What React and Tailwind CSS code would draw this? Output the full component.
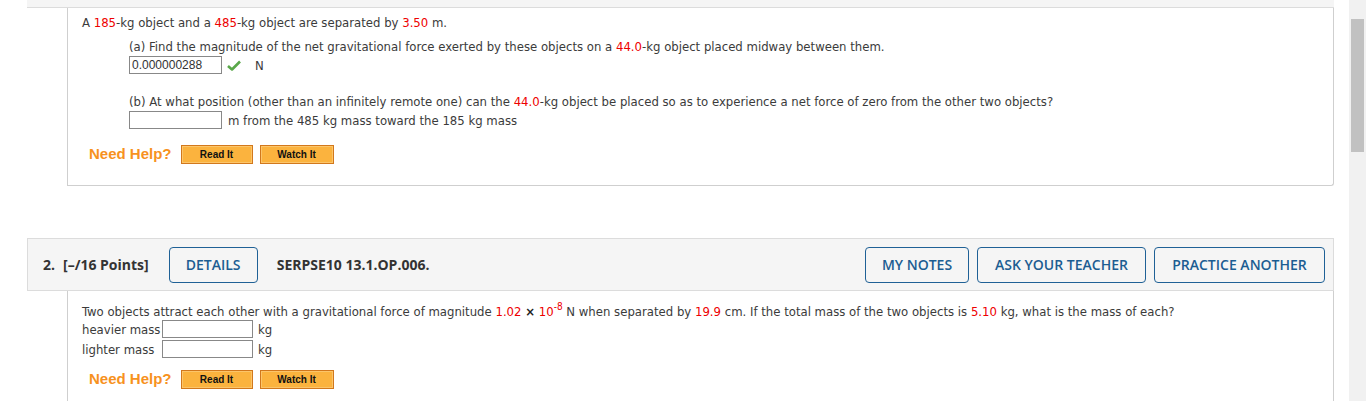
import React from "react";

const body = { fontFamily: '"DejaVu Sans Condensed", "Liberation Sans", sans-serif' };
const head = { fontFamily: '"Open Sans", "Liberation Sans", sans-serif' };

const Red = ({ children }) => <span className="text-[#ee0000]">{children}</span>;

const Check = () => (
  <svg width="14" height="11" viewBox="0 0 14 11" className="mx-[5px]">
    <path d="M1 6 L5 9.5 L13 1.5" fill="none" stroke="#5aa84a" strokeWidth="2.6" strokeLinejoin="round" />
  </svg>
);

const Box = ({ value = "", w = "w-[93px]" }) => (
  <div className={`${w} h-[18px] border border-[#888] bg-white px-[2px] text-[12px] leading-[16px] text-[#333]`} style={{ fontFamily: '"Liberation Sans", sans-serif' }}>
    {value}
  </div>
);

const OrangeBtn = ({ label, w }) => (
  <div className={`${w} h-[19px] border border-[#d2781c] bg-[#fbb33e] flex items-center justify-center shadow-[inset_0_0_0_1px_#fcc56a]`}>
    <span className="text-[10px] font-bold text-[#111]" style={{ fontFamily: '"Liberation Sans", sans-serif' }}>{label}</span>
  </div>
);

const NeedHelp = () => (
  <div className="flex items-center gap-[7px] ml-[7px]">
    <span className="text-[15px] font-bold text-[#f7921e] mr-[2px]" style={{ fontFamily: '"Liberation Sans", sans-serif' }}>Need Help?</span>
    <OrangeBtn label="Read It" w="w-[72px]" />
    <OrangeBtn label="Watch It" w="w-[74px]" />
  </div>
);

const BlueBtn = ({ children, w }) => (
  <div className={`${w} h-[36px] border border-[#1f6196] rounded-[4px] flex items-center justify-center text-[14px] font-semibold text-[#1c5d92]`}>
    {children}
  </div>
);

export default function App() {
  return (
    <div className="flex w-[1366px] h-[401px] overflow-hidden bg-white text-[13px] text-[#3b3b3b]" style={body}>
      <div className="flex-1 pl-[27px]">
        <div className="w-[1307px]">
          {/* question 1 tail */}
          <div className="h-[8px] bg-[#f5f5f5] border-b border-[#dcdcdc]" />
          <div className="ml-[40px] h-[178px] border-l border-r border-b border-[#cfcfcf] rounded-br-[3px] pl-[14px] pt-[6px]">
            <div className="leading-[17px]">
              A <Red>185</Red>-kg object and a <Red>485</Red>-kg object are separated by <Red>3.50</Red> m.
            </div>
            <div className="ml-[47px] mt-[7px] leading-[17px]">
              <div>(a) Find the magnitude of the net gravitational force exerted by these objects on a <Red>44.0</Red>-kg object placed midway between them.</div>
              <div className="flex items-center mt-[1px]">
                <Box value="0.000000288" />
                <Check />
                <span className="ml-[9px]">N</span>
              </div>
              <div className="mt-[19px]">(b) At what position (other than an infinitely remote one) can the <Red>44.0</Red>-kg object be placed so as to experience a net force of zero from the other two objects?</div>
              <div className="flex items-center mt-[1px]">
                <Box />
                <span className="ml-[6px]">m from the 485 kg mass toward the 185 kg mass</span>
              </div>
            </div>
            <div className="mt-[14px]">
              <NeedHelp />
            </div>
          </div>

          <div className="h-[52px]" />

          {/* question 2 header */}
          <div className="h-[53px] bg-[#f5f5f5] border border-[#dcdcdc] flex items-center pl-[15px] pr-[8px] text-[14px] text-[#333]" style={head}>
            <span className="font-bold">2.</span>
            <span className="font-bold ml-[8px]">[–/16 Points]</span>
            <div className="ml-[20px]">
              <BlueBtn w="w-[89px]">DETAILS</BlueBtn>
            </div>
            <span className="font-bold ml-[19px]">SERPSE10 13.1.OP.006.</span>
            <div className="ml-auto flex gap-[8px]">
              <BlueBtn w="w-[104px]">MY NOTES</BlueBtn>
              <BlueBtn w="w-[169px]">ASK YOUR TEACHER</BlueBtn>
              <BlueBtn w="w-[171px]">PRACTICE ANOTHER</BlueBtn>
            </div>
          </div>
          <div className="ml-[40px] h-[120px] border-l border-r border-[#cfcfcf] pl-[14px] pt-[12px]">
            <div className="leading-[17px]">
              Two objects attract each other with a gravitational force of magnitude <Red>1.02</Red> <span className="font-bold text-[#222]">×</span> <Red>10<span className="text-[10px] relative -top-[6px]">-8</span></Red> N when separated by <Red>19.9</Red> cm. If the total mass of the two objects is <Red>5.10</Red> kg, what is the mass of each?
            </div>
            <div className="flex items-center -mt-[1px] leading-[17px]">
              <span className="w-[80px]">heavier mass</span>
              <Box w="w-[91px]" />
              <span className="ml-[5px]">kg</span>
            </div>
            <div className="flex items-center mt-[2px] leading-[17px]">
              <span className="w-[80px]">lighter mass</span>
              <Box w="w-[91px]" />
              <span className="ml-[5px]">kg</span>
            </div>
            <div className="mt-[10px]">
              <NeedHelp />
            </div>
          </div>
        </div>
      </div>
      <div className="w-[17px] h-[401px] bg-[#f1f1f1] pt-[19px] px-[2px]">
        <div className="h-[133px] bg-[#c1c1c1]" />
      </div>
    </div>
  );
}
